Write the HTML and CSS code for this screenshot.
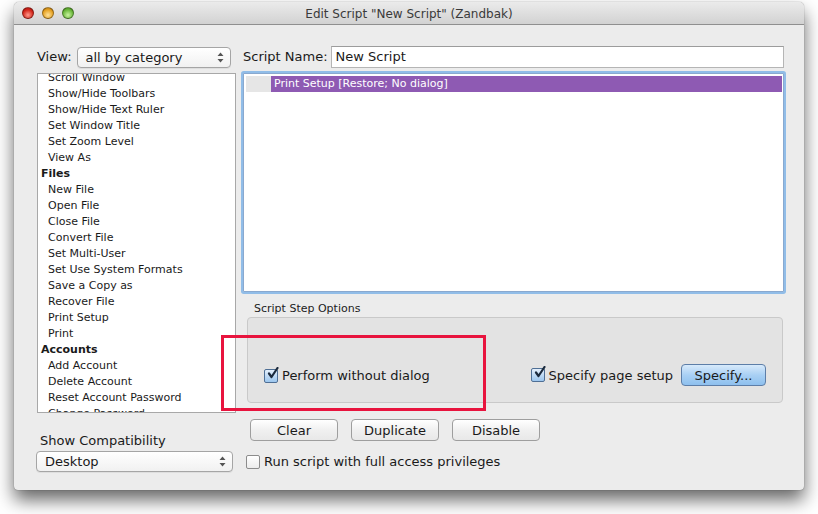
FILE: index.html
```html
<!DOCTYPE html>
<html>
<head>
    <title>Edit Script</title>
    <link rel="stylesheet" href="styles.css">
</head>
<body>
    <div class="window">
        <div class="titlebar">
            <div class="lights">
                <span class="light red"></span>
                <span class="light yellow"></span>
                <span class="light green"></span>
            </div>
            <div class="title">Edit Script "New Script" (Zandbak)</div>
        </div>

        <div class="content">
            <div class="col-left">
                <div class="top-row">
                    <span class="label">View:</span>
                    <div class="popup view-popup">
                        <span>all by category</span>
                        <svg class="arrows" width="7" height="11" viewBox="0 0 7 11"><path d="M3.5 0.5 L6.5 4 L0.5 4 Z M0.5 7 L6.5 7 L3.5 10.5 Z" fill="#555"/></svg>
                    </div>
                </div>
                <div class="step-list">
                    <div class="step-list-inner">
                        <div class="item">Scroll Window</div>
                        <div class="item">Show/Hide Toolbars</div>
                        <div class="item">Show/Hide Text Ruler</div>
                        <div class="item">Set Window Title</div>
                        <div class="item">Set Zoom Level</div>
                        <div class="item">View As</div>
                        <div class="heading">Files</div>
                        <div class="item">New File</div>
                        <div class="item">Open File</div>
                        <div class="item">Close File</div>
                        <div class="item">Convert File</div>
                        <div class="item">Set Multi-User</div>
                        <div class="item">Set Use System Formats</div>
                        <div class="item">Save a Copy as</div>
                        <div class="item">Recover File</div>
                        <div class="item">Print Setup</div>
                        <div class="item">Print</div>
                        <div class="heading">Accounts</div>
                        <div class="item">Add Account</div>
                        <div class="item">Delete Account</div>
                        <div class="item">Reset Account Password</div>
                        <div class="item">Change Password</div>
                    </div>
                </div>
                <div class="compat-label">Show Compatibility</div>
                <div class="popup compat-popup">
                    <span>Desktop</span>
                    <svg class="arrows" width="7" height="11" viewBox="0 0 7 11"><path d="M3.5 0.5 L6.5 4 L0.5 4 Z M0.5 7 L6.5 7 L3.5 10.5 Z" fill="#555"/></svg>
                </div>
            </div>

            <div class="col-right">
                <div class="top-row">
                    <span class="label">Script Name:</span>
                    <div class="text-field">New Script</div>
                </div>
                <div class="script-box">
                    <div class="script-row">
                        <span class="row-gutter"></span>
                        <span class="row-text">Print Setup [Restore; No dialog]</span>
                    </div>
                </div>
                <div class="options-label">Script Step Options</div>
                <div class="options-group">
                    <label class="check">
                        <span class="box checked">
                            <svg width="13" height="13" viewBox="0 0 13 13"><path d="M3 6.5 L5.5 10 L11.5 1" fill="none" stroke="#1b2a3d" stroke-width="2.2" stroke-linecap="round" stroke-linejoin="round"/></svg>
                        </span>
                        Perform without dialog
                    </label>
                    <div class="options-right">
                        <label class="check">
                            <span class="box checked">
                                <svg width="13" height="13" viewBox="0 0 13 13"><path d="M3 6.5 L5.5 10 L11.5 1" fill="none" stroke="#1b2a3d" stroke-width="2.2" stroke-linecap="round" stroke-linejoin="round"/></svg>
                            </span>
                            Specify page setup
                        </label>
                        <button class="btn btn-blue">Specify...</button>
                    </div>
                </div>
                <div class="button-row">
                    <button class="btn">Clear</button>
                    <button class="btn">Duplicate</button>
                    <button class="btn">Disable</button>
                </div>
                <label class="check privileges">
                    <span class="box"></span>
                    Run script with full access privileges
                </label>
            </div>
        </div>

        <div class="highlight"></div>
    </div>
</body>
</html>
```

FILE: styles.css
```css
body {
    margin: 0;
    padding: 2px 0 24px 14px;
    background-color: #ffffff;
    font-family: "DejaVu Sans", sans-serif;
    font-size: 12px;
    color: #1a1a1a;
}
.window {
    position: relative;
    width: 790px;
    height: 488px;
    background-color: #ececec;
    border-radius: 5px 5px 4px 4px;
    box-shadow: 0 10px 18px rgba(0, 0, 0, 0.6), 0 0 1px rgba(0, 0, 0, 0.6);
    overflow: hidden;
}
.titlebar {
    position: relative;
    height: 22px;
    background: linear-gradient(#ebebeb, #d2d2d2);
    border-bottom: 1px solid #8f8f8f;
    display: flex;
    align-items: center;
    justify-content: center;
}
.lights {
    position: absolute;
    left: 8px;
    top: 5px;
    display: flex;
    gap: 8px;
}
.light {
    width: 12px;
    height: 12px;
    border-radius: 50%;
    box-sizing: border-box;
    border: 1px solid rgba(0, 0, 0, 0.35);
}
.red {
    background: radial-gradient(circle at 50% 70%, #ff9b8e, #d3261b 60%, #a11510);
}
.yellow {
    background: radial-gradient(circle at 50% 70%, #ffe19a, #e6a224 60%, #a86b0c);
}
.green {
    background: radial-gradient(circle at 50% 70%, #c9f3a0, #6cb83c 60%, #3f7d18);
}
.title {
    font-size: 12px;
    color: #3a3a3a;
    padding-top: 1px;
}
.content {
    display: grid;
    grid-template-columns: 199px 541px;
    column-gap: 7px;
    padding: 20px 0 0 23px;
}
.col-left,
.col-right {
    display: flex;
    flex-direction: column;
}
.top-row {
    height: 23px;
    display: flex;
    align-items: center;
}
.label {
    font-size: 13px;
}
.popup {
    box-sizing: border-box;
    height: 21px;
    background: linear-gradient(#ffffff, #f1f1f1);
    border: 1px solid #a5a5a5;
    border-radius: 4px;
    display: flex;
    align-items: center;
    justify-content: space-between;
    padding: 0 6px 0 8px;
    font-size: 13px;
    box-shadow: 0 1px 0 rgba(0, 0, 0, 0.06);
}
.view-popup {
    width: 154px;
    margin-left: 5px;
    margin-top: 2px;
}
.arrows {
    flex: none;
}
.step-list {
    box-sizing: border-box;
    margin-top: 5px;
    height: 340px;
    background-color: #ffffff;
    border: 1px solid #a8a8a8;
    overflow: hidden;
}
.step-list-inner {
    margin-top: -4px;
}
.item,
.heading {
    height: 16px;
    line-height: 16px;
    font-size: 11px;
    white-space: nowrap;
}
.item {
    padding-left: 10px;
}
.heading {
    padding-left: 3px;
    font-weight: bold;
}
.compat-label {
    margin-top: 20px;
    padding-left: 3px;
    font-size: 13px;
    line-height: 16px;
}
.compat-popup {
    margin-top: 2px;
    width: 197px;
    margin-left: -1px;
}
.text-field {
    box-sizing: border-box;
    margin-left: 3px;
    flex: 1;
    height: 22px;
    background-color: #ffffff;
    border: 1px solid #b5b5b5;
    border-top-color: #9c9c9c;
    padding: 0 4px;
    line-height: 20px;
    font-size: 13px;
}
.script-box {
    box-sizing: border-box;
    margin-top: 5px;
    height: 219px;
    background-color: #ffffff;
    border: 1px solid #8aa9cf;
    box-shadow: 0 0 0 2px #91bde8;
    border-radius: 1px;
    padding: 2px 1px 0 2px;
}
.script-row {
    display: flex;
    height: 16px;
    line-height: 16px;
    font-size: 11px;
}
.row-gutter {
    width: 25px;
    background-color: #e6e6e6;
}
.row-text {
    flex: 1;
    background-color: #8e5ab3;
    color: #ffffff;
    padding-left: 3px;
}
.options-label {
    margin-top: 10px;
    padding-left: 11px;
    font-size: 11px;
    line-height: 14px;
    color: #222;
}
.options-group {
    box-sizing: border-box;
    margin: 1px 1px 0 4px;
    height: 86px;
    background-color: #e3e3e3;
    border: 1px solid #c9c9c9;
    border-radius: 4px;
    display: flex;
    align-items: flex-end;
    justify-content: space-between;
    padding: 0 16px 16px 16px;
}
.options-right {
    display: flex;
    align-items: center;
    gap: 8px;
}
.check {
    display: flex;
    align-items: center;
    gap: 4px;
    font-size: 13px;
}
.options-group > .check {
    margin-bottom: 3px;
}
.box {
    box-sizing: border-box;
    width: 14px;
    height: 14px;
    border: 1px solid #8c8c8c;
    border-radius: 2px;
    background: linear-gradient(#ffffff, #ececec);
    position: relative;
    flex: none;
}
.box.checked {
    border-color: #4f6f95;
    background: linear-gradient(#e4effb, #9cc6ee);
}
.box svg {
    position: absolute;
    left: 1px;
    top: -3px;
}
.btn {
    box-sizing: border-box;
    height: 22px;
    width: 88px;
    font-family: "DejaVu Sans", sans-serif;
    font-size: 13px;
    color: #1a1a1a;
    background: linear-gradient(#ffffff, #f0f0f0 50%, #e8e8e8);
    border: 1px solid #9e9e9e;
    border-radius: 4px;
    padding: 0;
}
.btn-blue {
    width: 85px;
    background: linear-gradient(#d8eafb, #a9d0f4 50%, #8ec0ee);
    border-color: #5d7ea8;
}
.button-row {
    display: flex;
    gap: 13px;
    margin-top: 16px;
    padding-left: 7px;
}
.privileges {
    margin-top: 13px;
    padding-left: 3px;
}
.highlight {
    position: absolute;
    left: 207px;
    top: 333px;
    width: 259px;
    height: 70px;
    border: 3px solid #e8143e;
}
```
